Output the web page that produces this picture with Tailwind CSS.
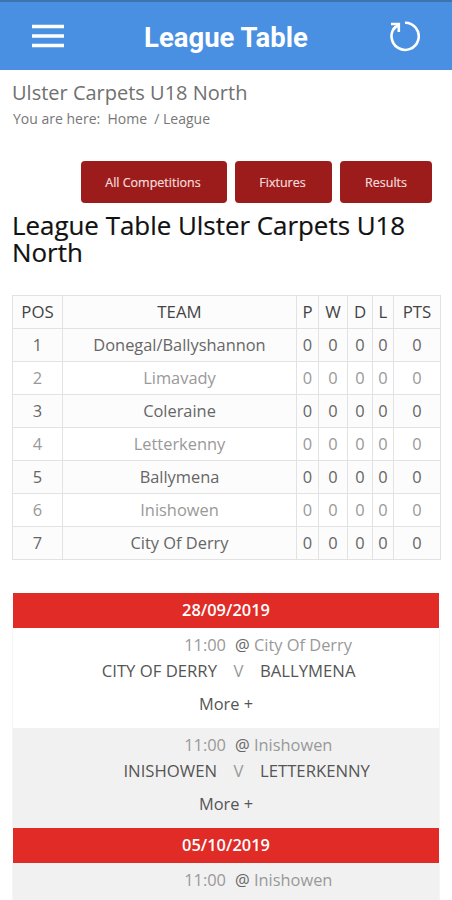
<!DOCTYPE html>
<html lang="en">
<head>
    <meta charset="UTF-8">
    <meta name="viewport" content="width=device-width, initial-scale=1.0">
    <title>League Table</title>
    <script src="https://cdn.jsdelivr.net/npm/@tailwindcss/browser@4"></script>
</head>
<body class="bg-white h-[900px] overflow-hidden font-['Open_Sans',sans-serif] text-[#666]">
    <!-- App bar -->
    <header class="h-[70px] bg-[#4990e2] border-t-2 border-[#4073ae] flex items-center justify-between pl-8 pr-8">
        <button class="w-8">
            <svg class="w-8 h-6" viewBox="0 0 32 24" fill="none" stroke="#fff" stroke-width="3.6">
                <path d="M0 2.5h32M0 12h32M0 21.5h32"></path>
            </svg>
        </button>
        <h1 class="font-['Roboto',sans-serif] font-bold text-[27.5px] leading-8 text-white mt-1">League Table</h1>
        <button class="w-8">
            <svg class="w-8 h-8" viewBox="0 0 32 32" fill="none" stroke="#fff" stroke-width="2.6">
                <path d="M17 2.7a13.6 13.6 0 1 1-9.2 3.7"></path>
                <path d="M3 4h7.8v8M10.5 4.3L5 9.8"></path>
            </svg>
        </button>
    </header>

    <!-- Breadcrumb -->
    <div class="px-3 pt-2">
        <p class="text-[20px] leading-[30px] text-[#707070]">Ulster Carpets U18 North</p>
        <p class="pl-px text-[14px] leading-[21px] text-[#777] whitespace-pre">You are here:  Home  / League</p>
    </div>

    <!-- Buttons -->
    <div class="flex justify-end gap-2 pr-5 mt-8">
        <a class="w-[146px] h-[42px] pt-0.5 pr-0.5 rounded bg-[#9b1c1a] text-[#f5dcdc] text-[12.5px] [-webkit-text-stroke:0.2px] flex items-center justify-center">All Competitions</a>
        <a class="w-[97px] h-[42px] pt-0.5 pr-0.5 rounded bg-[#9b1c1a] text-[#f5dcdc] text-[12.5px] [-webkit-text-stroke:0.2px] flex items-center justify-center">Fixtures</a>
        <a class="w-[92px] h-[42px] pt-0.5 rounded bg-[#9b1c1a] text-[#f5dcdc] text-[12.5px] [-webkit-text-stroke:0.2px] flex items-center justify-center">Results</a>
    </div>

    <h2 class="px-3 mt-[9px] text-[25.9px] [-webkit-text-stroke:0.2px] leading-[27px] text-[#111]">League Table Ulster Carpets U18 North</h2>

    <!-- Standings -->
    <table class="ml-3 mt-[29px] w-[429px] table-fixed border-collapse text-center text-[16.4px] leading-6">
        <colgroup>
            <col class="w-[50px]">
            <col class="w-[234px]">
            <col class="w-[22px]">
            <col class="w-[29px]">
            <col class="w-[25px]">
            <col class="w-[21px]">
            <col class="w-[47px]">
        </colgroup>
        <thead>
            <tr class="h-[33px] bg-[#fcfcfc] text-[#444] text-[16.8px]">
                <th class="border border-[#e2e2e2] font-normal p-0">POS</th>
                <th class="border border-[#e2e2e2] font-normal p-0">TEAM</th>
                <th class="border border-[#e2e2e2] font-normal p-0">P</th>
                <th class="border border-[#e2e2e2] font-normal p-0">W</th>
                <th class="border border-[#e2e2e2] font-normal p-0">D</th>
                <th class="border border-[#e2e2e2] font-normal p-0">L</th>
                <th class="border border-[#e2e2e2] font-normal p-0">PTS</th>
            </tr>
        </thead>
        <tbody id="standings"></tbody>
    </table>

    <!-- Fixtures -->
    <div class="mx-3 mt-[33px] text-[16.4px] leading-6" id="fixtures"></div>

    <script>
        const teams = ['Donegal/Ballyshannon', 'Limavady', 'Coleraine', 'Letterkenny', 'Ballymena', 'Inishowen', 'City Of Derry'];

        document.getElementById('standings').innerHTML = teams.map((team, i) => {
            const row = i % 2 ? 'text-[#999] bg-white' : 'text-[#666] bg-[#fcfcfc]';
            const cells = [i + 1, team, 0, 0, 0, 0, 0];
            return `<tr class="h-[33px] ${row}">` +
                cells.map(c => `<td class="border border-[#e2e2e2] p-0">${c}</td>`).join('') + '</tr>';
        }).join('');

        const days = [
            { date: '28/09/2019', games: [['City Of Derry', 'CITY OF DERRY', 'BALLYMENA'], ['Inishowen', 'INISHOWEN', 'LETTERKENNY']] },
            { date: '05/10/2019', games: [['Inishowen']] }
        ];

        document.getElementById('fixtures').innerHTML = days.map((day, d) => {
            const games = day.games.map(([venue, home, away], g) => {
                const shaded = d + g > 0 ? 'bg-[#f1f1f1]' : 'bg-white';
                const height = home ? 'h-[100px]' : 'h-[37px]';
                const teamsRow = home ? `
                    <div class="grid grid-cols-[204px_43px_1fr] mt-0.5 text-[16.7px] text-[#555]">
                        <span class="text-right">${home}</span>
                        <span class="text-center text-[#999]">V</span>
                        <span>${away}</span>
                    </div>
                    <p class="text-center mt-[9px] text-[#555]">More +</p>` : '';
                return `
                <div class="pt-[5px] border-x border-[#f5f5f5] ${height} ${shaded}">
                    <div class="grid grid-cols-[213px_1fr] text-[#999]">
                        <span class="text-right">11:00</span>
                        <span class="pl-[9px]"><span class="text-[#666]">@</span> ${venue}</span>
                    </div>${teamsRow}
                </div>`;
            }).join('');
            return `<div class="mx-px h-[35px] pb-0.5 flex items-center justify-center bg-[#e02b27] text-white font-semibold">${day.date}</div>${games}`;
        }).join('');
    </script>
</body>
</html>
